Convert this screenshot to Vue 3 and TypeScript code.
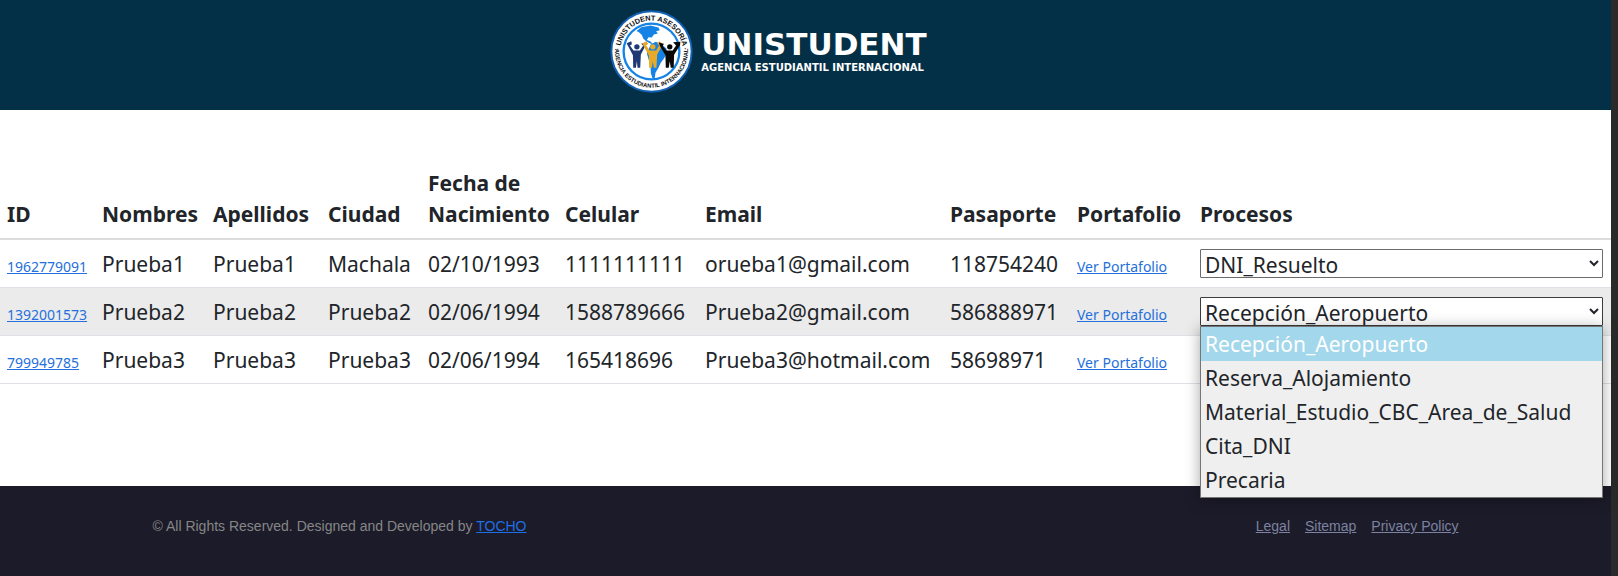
<script setup lang="ts">
import { ref } from 'vue'

interface Student {
  id: string
  nombres: string
  apellidos: string
  ciudad: string
  fecha: string
  celular: string
  email: string
  pasaporte: string
  proceso: string
}

const columns: string[] = [
  'ID', 'Nombres', 'Apellidos', 'Ciudad', 'Fecha de Nacimiento',
  'Celular', 'Email', 'Pasaporte', 'Portafolio', 'Procesos',
]

const options: string[] = [
  'Recepción_Aeropuerto',
  'Reserva_Alojamiento',
  'Material_Estudio_CBC_Area_de_Salud',
  'Cita_DNI',
  'Precaria',
]

const students = ref<Student[]>([
  { id: '1962779091', nombres: 'Prueba1', apellidos: 'Prueba1', ciudad: 'Machala', fecha: '02/10/1993', celular: '1111111111', email: 'orueba1@gmail.com', pasaporte: '118754240', proceso: 'DNI_Resuelto' },
  { id: '1392001573', nombres: 'Prueba2', apellidos: 'Prueba2', ciudad: 'Prueba2', fecha: '02/06/1994', celular: '1588789666', email: 'Prueba2@gmail.com', pasaporte: '586888971', proceso: 'Recepción_Aeropuerto' },
  { id: '799949785', nombres: 'Prueba3', apellidos: 'Prueba3', ciudad: 'Prueba3', fecha: '02/06/1994', celular: '165418696', email: 'Prueba3@hotmail.com', pasaporte: '58698971', proceso: 'Recepción_Aeropuerto' },
])

const openId = ref<string | null>('1392001573')

function choose(student: Student, option: string): void {
  student.proceso = option
  openId.value = null
}

function choices(student: Student): string[] {
  return options.includes(student.proceso) ? options : [student.proceso, ...options]
}
</script>

<template>
  <div class="page">
    <header class="header">
      <div class="brand">
        <svg class="seal" viewBox="28 27 250 250" aria-hidden="true">
          <defs>
            <path id="arc-top" d="M 66 192 A 95 95 0 1 1 240 192" />
            <path id="arc-bottom" d="M 45 130 A 110 110 0 1 0 261 130" />
          </defs>
          <circle cx="153" cy="152" r="121" fill="#fff" stroke="#1261b5" stroke-width="6" />
          <circle cx="153" cy="152" r="84" fill="#fff" stroke="#1583e6" stroke-width="7" />
          <g fill="#1583e6">
            <path d="M108 90 L122 79 L150 74 L174 80 L178 88 L167 91 L172 98 L160 101 L154 110 L144 109 L139 117 L149 121 L157 129 L149 128 L137 121 L128 113 L124 102 L116 95 Z" />
            <path d="M151 130 L166 123 L184 131 L198 143 L200 157 L190 174 L181 186 L174 201 L165 216 L163 231 L156 233 L151 217 L150 195 L145 178 L139 157 Z" />
          </g>
          <g fill="#1f3876">
            <circle cx="109" cy="138" r="8" />
            <path d="M78 127 L92 121 L94 130 L88 134 L99 149 L118 149 L128 134 L122 129 L136 125 L135 134 L121 161 L119 201 L111 201 L109 181 L106 201 L98 201 L97 163 L82 135 Z" />
          </g>
          <g fill="#e9aa28">
            <circle cx="157" cy="138" r="8" />
            <path d="M126 128 L137 120 L143 129 L137 134 L148 149 L167 149 L176 134 L170 129 L177 121 L186 130 L183 138 L170 161 L168 201 L160 201 L157 181 L154 201 L146 201 L145 163 L130 138 Z" />
          </g>
          <g fill="#080808">
            <circle cx="208" cy="138" r="8" />
            <path d="M175 125 L190 129 L187 136 L198 149 L217 149 L227 134 L218 124 L240 123 L239 133 L221 162 L220 201 L211 201 L208 181 L205 201 L196 201 L195 163 L179 137 Z" />
          </g>
          <text class="ring ring-top"><textPath href="#arc-top" startOffset="50%" text-anchor="middle">· UNISTUDENT ASESORÍA ·</textPath></text>
          <text class="ring ring-bottom"><textPath href="#arc-bottom" startOffset="50%" text-anchor="middle">AGENCIA ESTUDIANTIL INTERNACIONAL</textPath></text>
        </svg>
        <div class="wordmark">
          <span class="name">UNISTUDENT</span>
          <span class="tagline">AGENCIA ESTUDIANTIL INTERNACIONAL</span>
        </div>
      </div>
    </header>

    <main class="content">
      <table class="students">
        <colgroup>
          <col class="c-id"><col class="c-nombres"><col class="c-apellidos"><col class="c-ciudad"><col class="c-fecha">
          <col class="c-celular"><col class="c-email"><col class="c-pasaporte"><col class="c-portafolio"><col>
        </colgroup>
        <thead>
          <tr>
            <th v-for="column in columns" :key="column" scope="col">{{ column }}</th>
          </tr>
        </thead>
        <tbody>
          <tr v-for="student in students" :key="student.id">
            <td><a class="small-link" href="#">{{ student.id }}</a></td>
            <td>{{ student.nombres }}</td>
            <td>{{ student.apellidos }}</td>
            <td>{{ student.ciudad }}</td>
            <td>{{ student.fecha }}</td>
            <td>{{ student.celular }}</td>
            <td>{{ student.email }}</td>
            <td>{{ student.pasaporte }}</td>
            <td><a class="small-link" href="#">Ver Portafolio</a></td>
            <td>
              <div class="process">
                <select v-model="student.proceso" :class="{ open: openId === student.id }" :aria-label="`Proceso de ${student.nombres}`">
                  <option v-for="option in choices(student)" :key="option">{{ option }}</option>
                </select>
                <ul v-if="openId === student.id" class="menu" role="listbox" aria-label="Procesos">
                  <li
                    v-for="option in options"
                    :key="option"
                    role="option"
                    :aria-selected="option === student.proceso"
                    :class="{ selected: option === student.proceso }"
                    @click="choose(student, option)"
                  >{{ option }}</li>
                </ul>
              </div>
            </td>
          </tr>
        </tbody>
      </table>
    </main>

    <footer class="footer">
      <div class="footer-inner">
        <p>© All Rights Reserved. Designed and Developed by <a href="#">TOCHO</a></p>
        <nav class="legal" aria-label="Legal">
          <a href="#">Legal</a>
          <a href="#">Sitemap</a>
          <a href="#">Privacy Policy</a>
        </nav>
      </div>
    </footer>
  </div>
</template>

<style>
body {
  margin: 0;
  background: #fff;
}
</style>

<style scoped>
.page {
  display: flex;
  flex-direction: column;
  min-height: 100vh;
  box-sizing: border-box;
  border-right: 7px solid #2a2a2a;
  font-family: "Noto Sans", "Open Sans", sans-serif;
  font-size: 21px;
  line-height: 31px;
  color: #212529;
}

.header {
  display: flex;
  justify-content: center;
  padding: 10px 74px 17px 0;
  background: #033047;
}

.brand {
  display: flex;
  align-items: center;
  gap: 8px;
}

.seal {
  width: 83px;
  height: 83px;
}

.ring {
  font-family: "Liberation Sans", Arial, sans-serif;
  font-weight: bold;
  fill: #111;
}

.ring-top {
  font-size: 22px;
}

.ring-bottom {
  font-size: 18px;
}

.wordmark {
  display: flex;
  flex-direction: column;
  font-family: "DejaVu Sans", sans-serif;
  font-weight: bold;
  color: #fff;
  white-space: nowrap;
}

.name {
  font-size: 31px;
  line-height: 32px;
}

.tagline {
  font-size: 10px;
  line-height: 16px;
}

.content {
  flex: 1;
  padding: 50px 0 100px;
}

.students {
  width: 100%;
  table-layout: fixed;
  border-collapse: separate;
  border-spacing: 0;
}

.c-id { width: 94px; }
.c-nombres { width: 111px; }
.c-apellidos { width: 115px; }
.c-ciudad { width: 100px; }
.c-fecha { width: 137px; }
.c-celular { width: 140px; }
.c-email { width: 245px; }
.c-pasaporte { width: 127px; }
.c-portafolio { width: 123px; }

th,
td {
  text-align: left;
  border-bottom: 1px solid #dee2e6;
}

th {
  padding: 8px 0 8px 8px;
  vertical-align: bottom;
  font-weight: bold;
  border-bottom: 2px solid #dcdcdc;
}

td {
  padding: 9px 0 7px 8px;
  vertical-align: top;
  white-space: nowrap;
}

th:first-child,
td:first-child {
  padding-left: 7px;
}

td:last-child {
  padding-right: 8px;
}

tbody tr:nth-child(even) td {
  background: #ebebeb;
}

.small-link {
  font-size: 14px;
  line-height: 16px;
  color: #2470dc;
}

.process {
  position: relative;
  display: flex;
}

select {
  width: 100%;
  height: 29px;
  box-sizing: border-box;
  padding: 0;
  border: 1px solid #6b6b6b;
  border-radius: 1px;
  background-color: #fff;
  color: #212529;
  font: inherit;
  line-height: 27px;
}

select.open {
  border-color: #3c3c3c;
}

.menu {
  position: absolute;
  z-index: 1;
  top: 100%;
  left: 0;
  right: 0;
  margin: 0;
  padding: 0;
  list-style: none;
  background: #efefef;
  border: 1px solid #767676;
  box-shadow: 0 2px 14px rgba(0, 0, 0, 0.35);
}

.menu li {
  padding: 0 4px;
  line-height: 34px;
}

.menu .selected {
  background: #a3d7eb;
  color: #fff;
}

.footer {
  padding: 24px 16px 34px;
  background: #1c1b29;
  font-family: "Liberation Sans", Arial, sans-serif;
  font-size: 14px;
  line-height: 32px;
  color: #868686;
}

.footer-inner {
  display: flex;
  justify-content: space-between;
  max-width: 1306px;
  margin: 0 auto;
}

.footer p {
  margin: 0;
}

.footer p a {
  color: #1f6fe5;
}

.legal {
  display: flex;
  gap: 15px;
}

.legal a {
  color: #7d82a0;
}
</style>
